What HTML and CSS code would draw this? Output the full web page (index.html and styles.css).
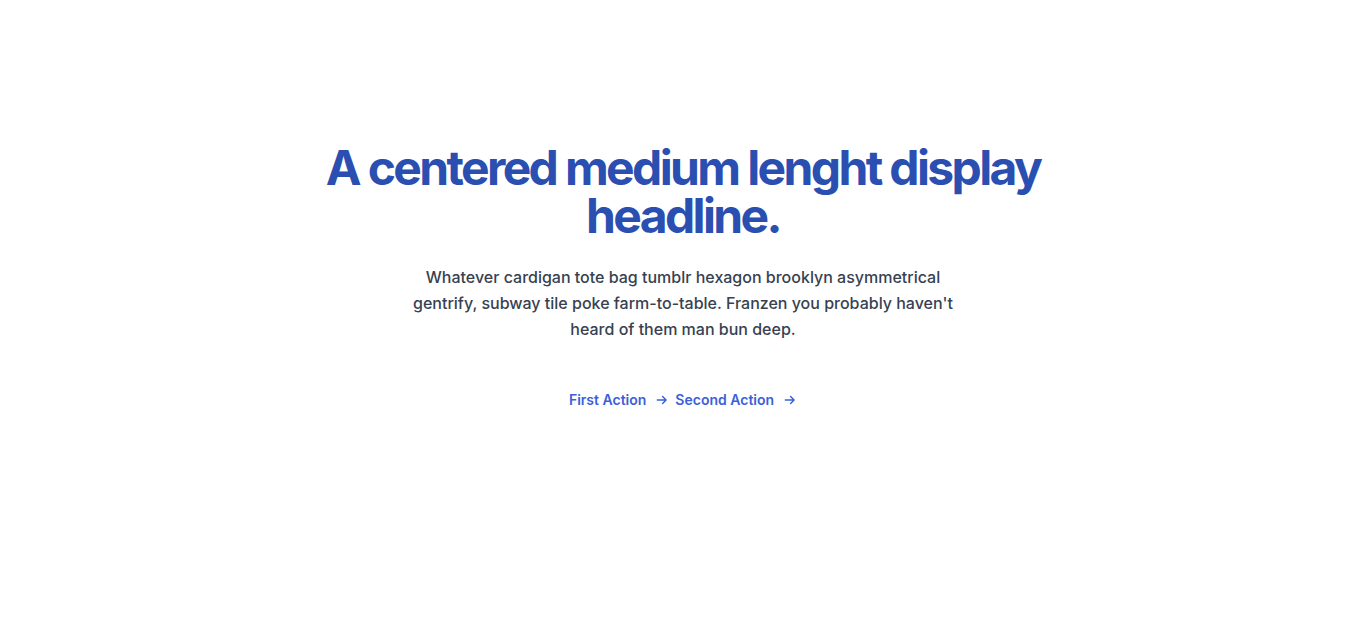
FILE: index.html
```html
<!DOCTYPE html>
<html lang="en">
<head>
<meta charset="utf-8">
<title>Hero</title>
<link rel="stylesheet" href="styles.css">
</head>
<body>
<section class="hero">
  <div class="container">
    <h1 class="title">A centered medium lenght display headline.</h1>
    <p class="lead">Whatever cardigan tote bag tumblr hexagon brooklyn asymmetrical gentrify, subway tile poke farm-to-table. Franzen you probably haven't heard of them man bun deep.</p>
    <div class="actions">
      <a href="#" class="action">First Action
        <svg class="arrow" viewBox="0 0 24 24" fill="none" stroke="currentColor" stroke-width="2.5" stroke-linecap="round" stroke-linejoin="round"><path d="M4 12h15M13 6l6 6-6 6"/></svg>
      </a>
      <a href="#" class="action">Second Action
        <svg class="arrow" viewBox="0 0 24 24" fill="none" stroke="currentColor" stroke-width="2.5" stroke-linecap="round" stroke-linejoin="round"><path d="M4 12h15M13 6l6 6-6 6"/></svg>
      </a>
    </div>
  </div>
</section>
</body>
</html>
```

FILE: styles.css
```css
* { box-sizing: border-box; }
html, body { margin: 0; padding: 0; background: #fff; }
body { font-family: Inter, "Noto Sans", sans-serif; }
.hero { padding: 144px 20px 96px; }
.container { max-width: 768px; margin: 0 auto; display: flex; flex-direction: column; align-items: center; text-align: center; }
.title { margin: 0; font-size: 48px; line-height: 48px; font-weight: 700; letter-spacing: -0.055em; color: #2a4fb1; }
.lead { margin: 24px 0 0; max-width: 544px; font-size: 16px; line-height: 26px; font-weight: 500; color: #374151; }
.actions { margin-top: 48px; display: flex; justify-content: center; gap: 6px; }
.action { display: inline-flex; align-items: center; gap: 9px; font-size: 14px; line-height: 20px; font-weight: 600; color: #3b60d9; text-decoration: none; }
.arrow { width: 14px; height: 14px; }
```
